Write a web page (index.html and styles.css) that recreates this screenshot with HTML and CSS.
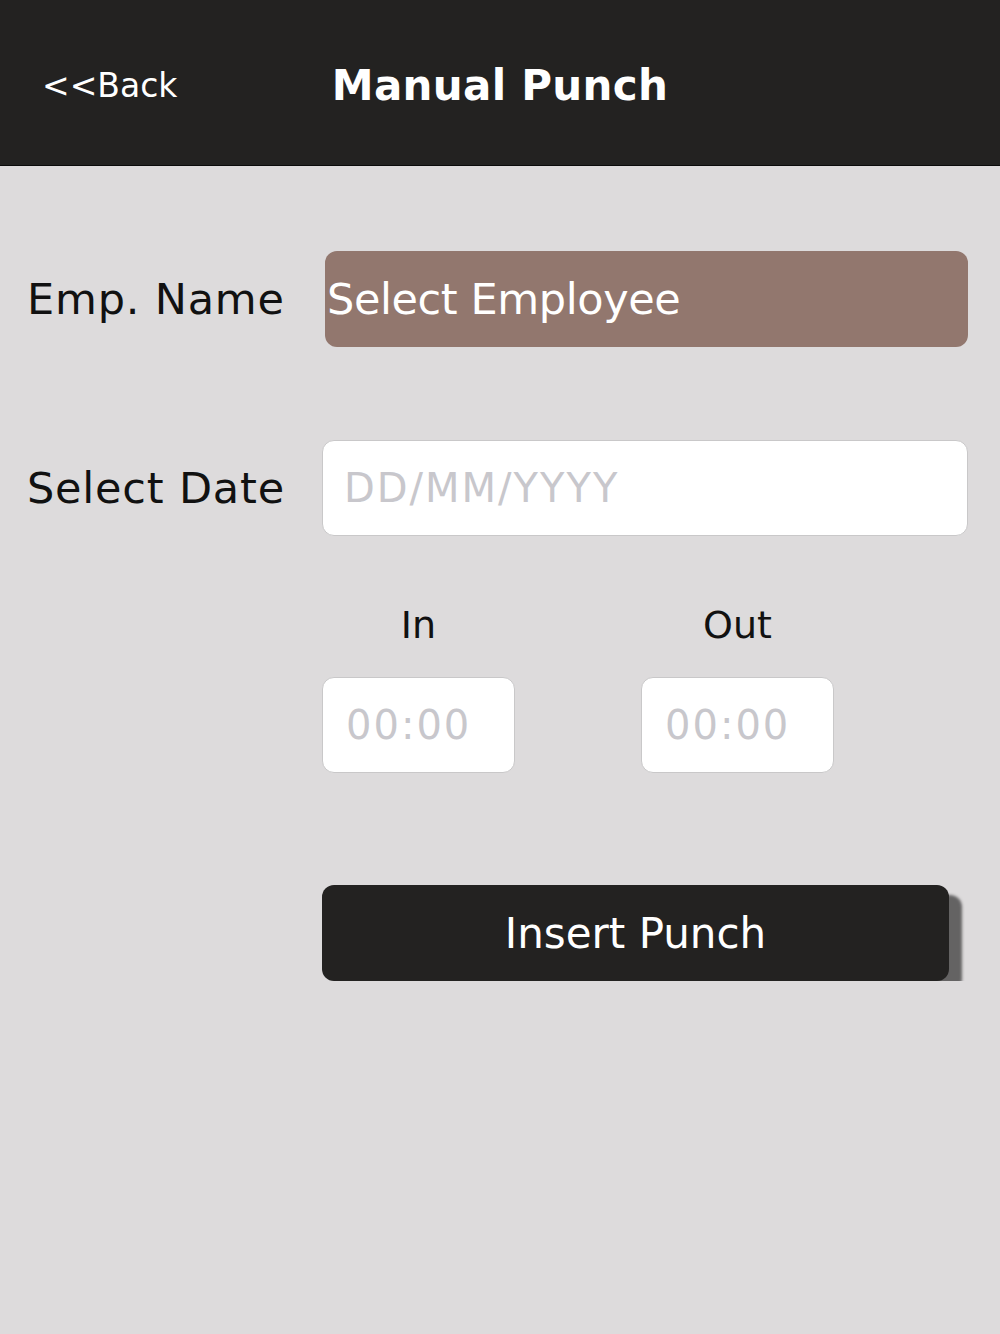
FILE: index.html
```html
<!doctype html>
<html lang="en">
  <head>
    <meta charset="UTF-8" />
    <meta name="viewport" content="width=device-width, initial-scale=1.0">
    <title>Manual Punch</title>
    <link rel="stylesheet" href="styles.css">
  </head>
  <body>
    <div class="top-bar">
      <a class="back-link" href="#">&lt;&lt;Back</a>
      <h1 class="title">Manual Punch</h1>
      <span></span>
    </div>

    <div class="form">
      <div class="row emp-row">
        <label class="label">Emp. Name</label>
        <button class="select-btn">Select Employee</button>
      </div>

      <div class="row date-row">
        <label class="label" for="punch-date">Select Date</label>
        <input class="field" id="punch-date" type="text" placeholder="DD/MM/YYYY" />
      </div>

      <div class="times">
        <div class="time-col">
          <span class="time-label">In</span>
          <input class="field time-field" type="text" placeholder="00:00" />
        </div>
        <div class="time-col">
          <span class="time-label">Out</span>
          <input class="field time-field" type="text" placeholder="00:00" />
        </div>
      </div>

      <div class="actions">
        <button class="insert-btn">Insert Punch</button>
      </div>
    </div>
  </body>
</html>
```

FILE: styles.css
```css
body {
  font-family: "DejaVu Sans", sans-serif;
  margin: 0;
  background-color: #dddbdc;
  color: #111;
}
.top-bar {
  display: grid;
  grid-template-columns: 1fr auto 1fr;
  align-items: center;
  height: 159px;
  padding-top: 6px;
  background-color: #232221;
  border-bottom: 1px solid #0b0b0b;
}
.back-link {
  padding-left: 42px;
  font-size: 33px;
  color: white;
  text-decoration: none;
}
.title {
  margin: 0;
  font-size: 42px;
  font-weight: bold;
  letter-spacing: 0.3px;
  color: white;
}
.form {
  padding: 85px 32px 0 27px;
}
.row {
  display: grid;
  grid-template-columns: 295px 1fr;
  align-items: center;
}
.date-row {
  margin-top: 93px;
}
.label {
  font-size: 43px;
  letter-spacing: 0.8px;
}
.select-btn {
  height: 96px;
  margin-left: 3px;
  padding: 0 0 0 2px;
  border: none;
  border-radius: 12px;
  background-color: #92776e;
  color: white;
  font-family: inherit;
  font-size: 43px;
  letter-spacing: -0.4px;
  text-align: left;
}
.field {
  box-sizing: border-box;
  height: 96px;
  padding: 0 0 0 21px;
  border: 1px solid #c9c8c9;
  border-radius: 12px;
  background-color: white;
  font-family: inherit;
  font-size: 40px;
  letter-spacing: 2px;
  outline: none;
}
.field::placeholder {
  color: #c8c7cc;
}
.times {
  display: flex;
  gap: 126px;
  margin-top: 66px;
  padding-left: 295px;
}
.time-col {
  display: flex;
  flex-direction: column;
  align-items: center;
  gap: 29px;
  width: 193px;
}
.time-label {
  font-size: 38px;
  line-height: 46px;
}
.time-field {
  width: 193px;
  padding-left: 23px;
}
.actions {
  margin-top: 112px;
  padding-left: 295px;
}
.insert-btn {
  width: 627px;
  height: 96px;
  border: none;
  border-radius: 12px;
  background-color: #232221;
  color: white;
  font-family: inherit;
  font-size: 42px;
  box-shadow: 13px 10px 3px rgba(0, 0, 0, 0.55);
}
```
